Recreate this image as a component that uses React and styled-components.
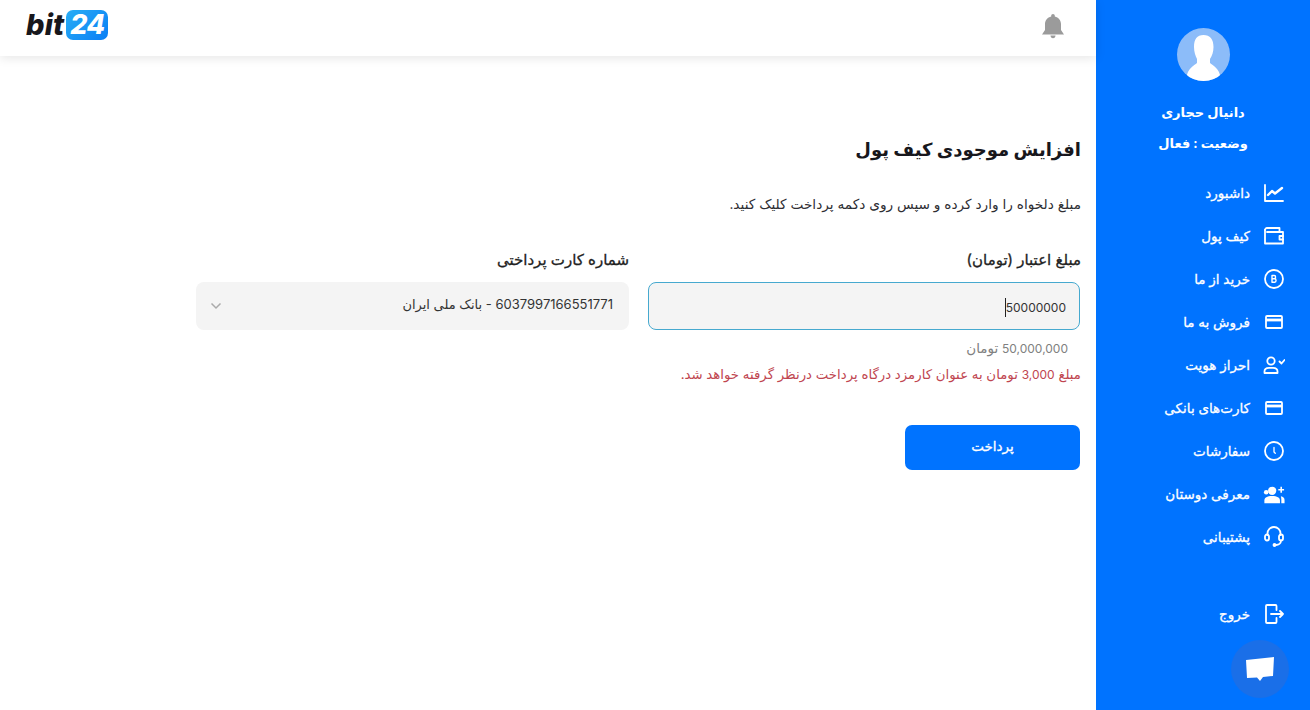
import React from 'react';
import styled, { createGlobalStyle, css } from 'styled-components';

const GlobalStyle = createGlobalStyle`
  html, body {
    margin: 0;
    padding: 0;
    background: #fff;
    font-family: 'Inter', 'DejaVu Sans', sans-serif;
  }
  * { box-sizing: border-box; }
`;

// the reference face sits between regular and bold
const medium = css`
  font-weight: 400;
  -webkit-text-stroke: 0.3px currentColor;
`;

const Page = styled.div`
  display: flex;
  direction: rtl;
  width: 1310px;
  height: 710px;
  overflow: hidden;
  background: #fff;
`;

const Sidebar = styled.aside`
  width: 214px;
  height: 710px;
  flex-shrink: 0;
  background: #0073ff;
  color: #fff;
  display: flex;
  flex-direction: column;
  align-items: stretch;
  padding-top: 28px;
`;

const Avatar = styled.div`
  width: 53px;
  height: 53px;
  border-radius: 50%;
  background: #8cbcf9;
  overflow: hidden;
  align-self: center;
  svg { display: block; }
`;

const UserLine = styled.div`
  text-align: center;
  font-size: 13px;
  font-weight: 700;
  line-height: 20px;
  height: 20px;
  margin-top: ${(p) => p.$top}px;
`;

const Menu = styled.nav`
  display: flex;
  flex-direction: column;
  margin-top: 18px;
`;

const MenuItem = styled.a`
  display: flex;
  align-items: center;
  height: 43px;
  padding-right: 25px;
  gap: 13px;
  font-size: 13.5px;
  ${medium}
  color: #fff;
  margin-top: ${(p) => p.$top || 0}px;
  white-space: nowrap;
`;

const IconSlot = styled.span`
  width: 22px;
  height: 22px;
  flex-shrink: 0;
  display: flex;
  align-items: center;
  justify-content: center;
`;

const ChatBubble = styled.div`
  position: absolute;
  left: 1231px;
  top: 640px;
  width: 58px;
  height: 58px;
  border-radius: 50%;
  background: #1a6fe8;
  display: flex;
  align-items: center;
  justify-content: center;
`;

const Main = styled.main`
  flex: 1;
  display: flex;
  flex-direction: column;
  min-width: 0;
`;

const Header = styled.header`
  height: 56px;
  background: #fff;
  box-shadow: 0 2px 10px rgba(0, 0, 0, 0.1);
  display: flex;
  align-items: center;
  justify-content: space-between;
  padding: 0 31px 0 0;
`;

const Logo = styled.div`
  display: flex;
  direction: ltr;
  align-items: center;
  gap: 2px;
  margin-left: 26px;
  margin-bottom: 6px;
`;

const LogoWord = styled.span`
  font-family: 'Inter', sans-serif;
  font-style: italic;
  font-weight: 800;
  font-size: 29px;
  line-height: 30px;
  letter-spacing: 0.2px;
  color: #17171c;
`;

const LogoBadge = styled.span`
  width: 42px;
  height: 30px;
  border-radius: 7px;
  background: linear-gradient(135deg, #28aef5, #0a7ef5);
  color: #fff;
  font-family: 'Inter', sans-serif;
  font-style: italic;
  font-weight: 800;
  font-size: 27px;
  line-height: 30px;
  text-align: center;
  letter-spacing: -0.5px;
`;

const BellWrap = styled.div`
  margin-bottom: 4px;
  svg { display: block; }
`;

const Content = styled.section`
  padding: 80px 15px 0 16px;
  display: flex;
  flex-direction: column;
`;

const Title = styled.h1`
  margin: 0;
  font-size: 18px;
  font-weight: 700;
  line-height: 28px;
  color: #17171c;
`;

const Intro = styled.p`
  margin: 30px 0 0;
  font-size: 13.7px;
  line-height: 20px;
  color: #2e2e33;
`;

const FormRow = styled.div`
  display: grid;
  grid-template-columns: 433px 433px;
  column-gap: 19px;
  margin-top: 36px;
`;

const Field = styled.div`
  display: flex;
  flex-direction: column;
`;

const Label = styled.label`
  font-size: 15px;
  ${medium}
  line-height: 20px;
  color: #222;
  margin-bottom: 12px;
`;

const AmountInput = styled.div`
  height: 48px;
  margin-right: 1px;
  background: #f4f4f4;
  border: 1px solid #46a9cf;
  border-radius: 8px;
  display: flex;
  align-items: center;
  justify-content: flex-start;
  padding: 2px 13px 0;
  font-size: 12px;
  color: #333;
`;

const Caret = styled.span`
  display: inline-block;
  width: 1px;
  height: 19px;
  background: #222;
`;

const Digits = styled.span`
  font-size: 12px;
`;

const Hint = styled.div`
  font-size: 13.5px;
  line-height: 20px;
  color: #808080;
  margin-top: 8px;
  padding-right: 13px;
`;

const Warning = styled.div`
  font-size: 13.3px;
  line-height: 20px;
  color: #c0454f;
  margin-top: 5px;
`;

const SelectBox = styled.div`
  height: 48px;
  background: #f4f4f4;
  border-radius: 8px;
  display: flex;
  align-items: center;
  justify-content: space-between;
  padding: 0 16px 4px 14px;
  font-size: 13px;
  color: #333;
  svg { display: block; margin-top: 4px; }
`;

const PayButton = styled.button`
  align-self: flex-start;
  margin: 40px 1px 0 0;
  width: 175px;
  height: 45px;
  border: none;
  border-radius: 7px;
  background: #0073ff;
  color: #fff;
  font-family: inherit;
  font-size: 13.5px;
  ${medium}
  padding-bottom: 4px;
`;

const stroke = { fill: 'none', stroke: '#fff', strokeWidth: 1.8, strokeLinecap: 'round', strokeLinejoin: 'round' };

const ChartIcon = () => (
  <svg width="20" height="18" viewBox="0 0 20 18" {...stroke}>
    <path d="M1 1v16h18" />
    <path d="M4 11l4-4 3 2.500 7-5.500" strokeWidth="2.400" />
  </svg>
);
const WalletIcon = () => (
  <svg width="20" height="18" viewBox="0 0 20 18" {...stroke}>
    <path d="M1 3V16.500h18V5H3" />
    <path d="M1 3C1 1.800 2 1 3 1h12.500v4" />
    <path d="M19 9h-3.500v3.500H19" />
  </svg>
);
const BitcoinIcon = () => (
  <svg width="20" height="20" viewBox="0 0 20 20">
    <circle cx="10" cy="10" r="9" {...stroke} />
    <path d="M8 6.500h2.300c1.700 0 1.700 3 0 3.200H8zM8 9.700h2.700c1.800 0 1.800 3.500 0 3.500H8z" {...stroke} strokeWidth="1.400" />
  </svg>
);
const CardIcon = () => (
  <svg width="18" height="14" viewBox="0 0 18 14">
    <rect x="1" y="1" width="16" height="12" rx="1" {...stroke} />
    <rect x="1" y="3.600" width="16" height="2.800" fill="#fff" />
  </svg>
);
const UserCheckIcon = () => (
  <svg width="22" height="18" viewBox="0 0 22 18" {...stroke}>
    <circle cx="8" cy="5" r="3.700" />
    <path d="M1.500 17v-1.500c0-2.400 2-3.700 4.500-3.700h4c2.500 0 4.500 1.300 4.500 3.700V17z" />
    <path d="M16.500 5.500l2 2 3-3.500" />
  </svg>
);
const ClockIcon = () => (
  <svg width="20" height="20" viewBox="0 0 20 20" {...stroke}>
    <circle cx="10" cy="10" r="9" />
    <path d="M10 6.500v4.500l1.300 1.300" strokeWidth="1.300" />
  </svg>
);
const UsersPlusIcon = () => (
  <svg width="24" height="20" viewBox="0 0 24 20" fill="#fff">
    <circle cx="10" cy="6.500" r="4.500" />
    <path d="M1.500 20v-3c0-3 3-4.800 8.500-4.800s8.500 1.800 8.500 4.800v3z" />
    <circle cx="3.500" cy="8" r="2.500" />
    <path d="M19 2h1.700v2.500H23v1.600h-2.300v2.400H19V6.100h-2.300V4.500H19z" />
    <path d="M19.500 12.500c2.500.3 4 1.700 4 4V20h-3.500v-3.500c0-1.500-.2-2.800-.5-4z" />
  </svg>
);
const HeadsetIcon = () => (
  <svg width="20" height="21" viewBox="0 0 20 21" {...stroke}>
    <path d="M3.500 9V7.500a6.500 6.500 0 0 1 13 0V9" />
    <rect x="1" y="8.500" width="4" height="6" rx="2" />
    <rect x="15" y="8.500" width="4" height="6" rx="2" />
    <path d="M17 14.500c0 3-2.500 4.500-5 4.500" />
    <circle cx="10.500" cy="19" r="1" fill="#fff" />
  </svg>
);
const ExitIcon = () => (
  <svg width="20" height="20" viewBox="0 0 20 20" {...stroke}>
    <path d="M12.500 6V2c0-.6-.4-1-1-1H3c-.6 0-1 .4-1 1v16c0 .6.4 1 1 1h8.500c.6 0 1-.4 1-1v-4" />
    <path d="M7 10h12M16 7l3 3-3 3" />
  </svg>
);

const menuItems = [
  { label: 'داشبورد', icon: <ChartIcon /> },
  { label: 'کیف پول', icon: <WalletIcon /> },
  { label: 'خرید از ما', icon: <BitcoinIcon /> },
  { label: 'فروش به ما', icon: <CardIcon /> },
  { label: 'احراز هویت', icon: <UserCheckIcon /> },
  { label: 'کارت‌های بانکی', icon: <CardIcon /> },
  { label: 'سفارشات', icon: <ClockIcon /> },
  { label: 'معرفی دوستان', icon: <UsersPlusIcon /> },
  { label: 'پشتیبانی', icon: <HeadsetIcon /> },
];

export default function App() {
  return (
    <Page>
      <GlobalStyle />
      <Sidebar>
        <Avatar>
          <svg width="53" height="53" viewBox="0 0 53 53">
            <path
              fill="#fff"
              d="M17 19c0-8 3-12 9.500-12S36.500 11 36.500 19c0 5-1.500 9-3.500 12v4c3 3 9 4 11 16v2H9v-2c2-12 8-13 11-16v-4c-1.500-3-3-7-3-12z"
            />
          </svg>
        </Avatar>
        <UserLine $top={21}>دانیال حجاری</UserLine>
        <UserLine $top={11}>وضعیت : فعال</UserLine>
        <Menu>
          {menuItems.map((item) => (
            <MenuItem key={item.label}>
              <IconSlot>{item.icon}</IconSlot>
              {item.label}
            </MenuItem>
          ))}
          <MenuItem $top={34}>
            <IconSlot><ExitIcon /></IconSlot>
            خروج
          </MenuItem>
        </Menu>
      </Sidebar>
      <Main>
        <Header>
          <BellWrap>
            <svg width="24" height="25" viewBox="0 0 24 25" fill="#9b9b9b">
              <path d="M12 0c1 0 1.800.8 1.800 1.800v.6C17.500 3.200 20 6.300 20 10v6l3 4.500H1L4 16v-6c0-3.700 2.500-6.800 6.200-7.600v-.6C10.200.8 11 0 12 0z" />
              <path d="M9.500 21.500h5c0 1.500-1 2.800-2.500 2.800s-2.500-1.300-2.500-2.800z" />
            </svg>
          </BellWrap>
          <Logo>
            <LogoWord>bit</LogoWord>
            <LogoBadge>24</LogoBadge>
          </Logo>
        </Header>
        <Content>
          <Title>افزایش موجودی کیف پول</Title>
          <Intro>مبلغ دلخواه را وارد کرده و سپس روی دکمه پرداخت کلیک کنید.</Intro>
          <FormRow>
            <Field>
              <Label>مبلغ اعتبار (تومان)</Label>
              <AmountInput>
                50000000
                <Caret />
              </AmountInput>
              <Hint><Digits>50,000,000</Digits> تومان</Hint>
              <Warning>مبلغ <Digits>3,000</Digits> تومان به عنوان کارمزد درگاه پرداخت درنظر گرفته خواهد شد.</Warning>
            </Field>
            <Field>
              <Label>شماره کارت پرداختی</Label>
              <SelectBox>
                <span>6037997166551771 - بانک ملی ایران</span>
                <svg width="12" height="8" viewBox="0 0 12 8" fill="none" stroke="#aaa" strokeWidth="1.500">
                  <path d="M1.500 1.500L6 6l4.500-4.500" />
                </svg>
              </SelectBox>
            </Field>
          </FormRow>
          <PayButton>پرداخت</PayButton>
        </Content>
      </Main>
      <ChatBubble>
        <svg width="30" height="26" viewBox="0 0 30 26" fill="#fff">
          <path d="M1 4L29 1l-1 19-10 1-3 4-3-3.500-10 .5z" />
        </svg>
      </ChatBubble>
    </Page>
  );
}
